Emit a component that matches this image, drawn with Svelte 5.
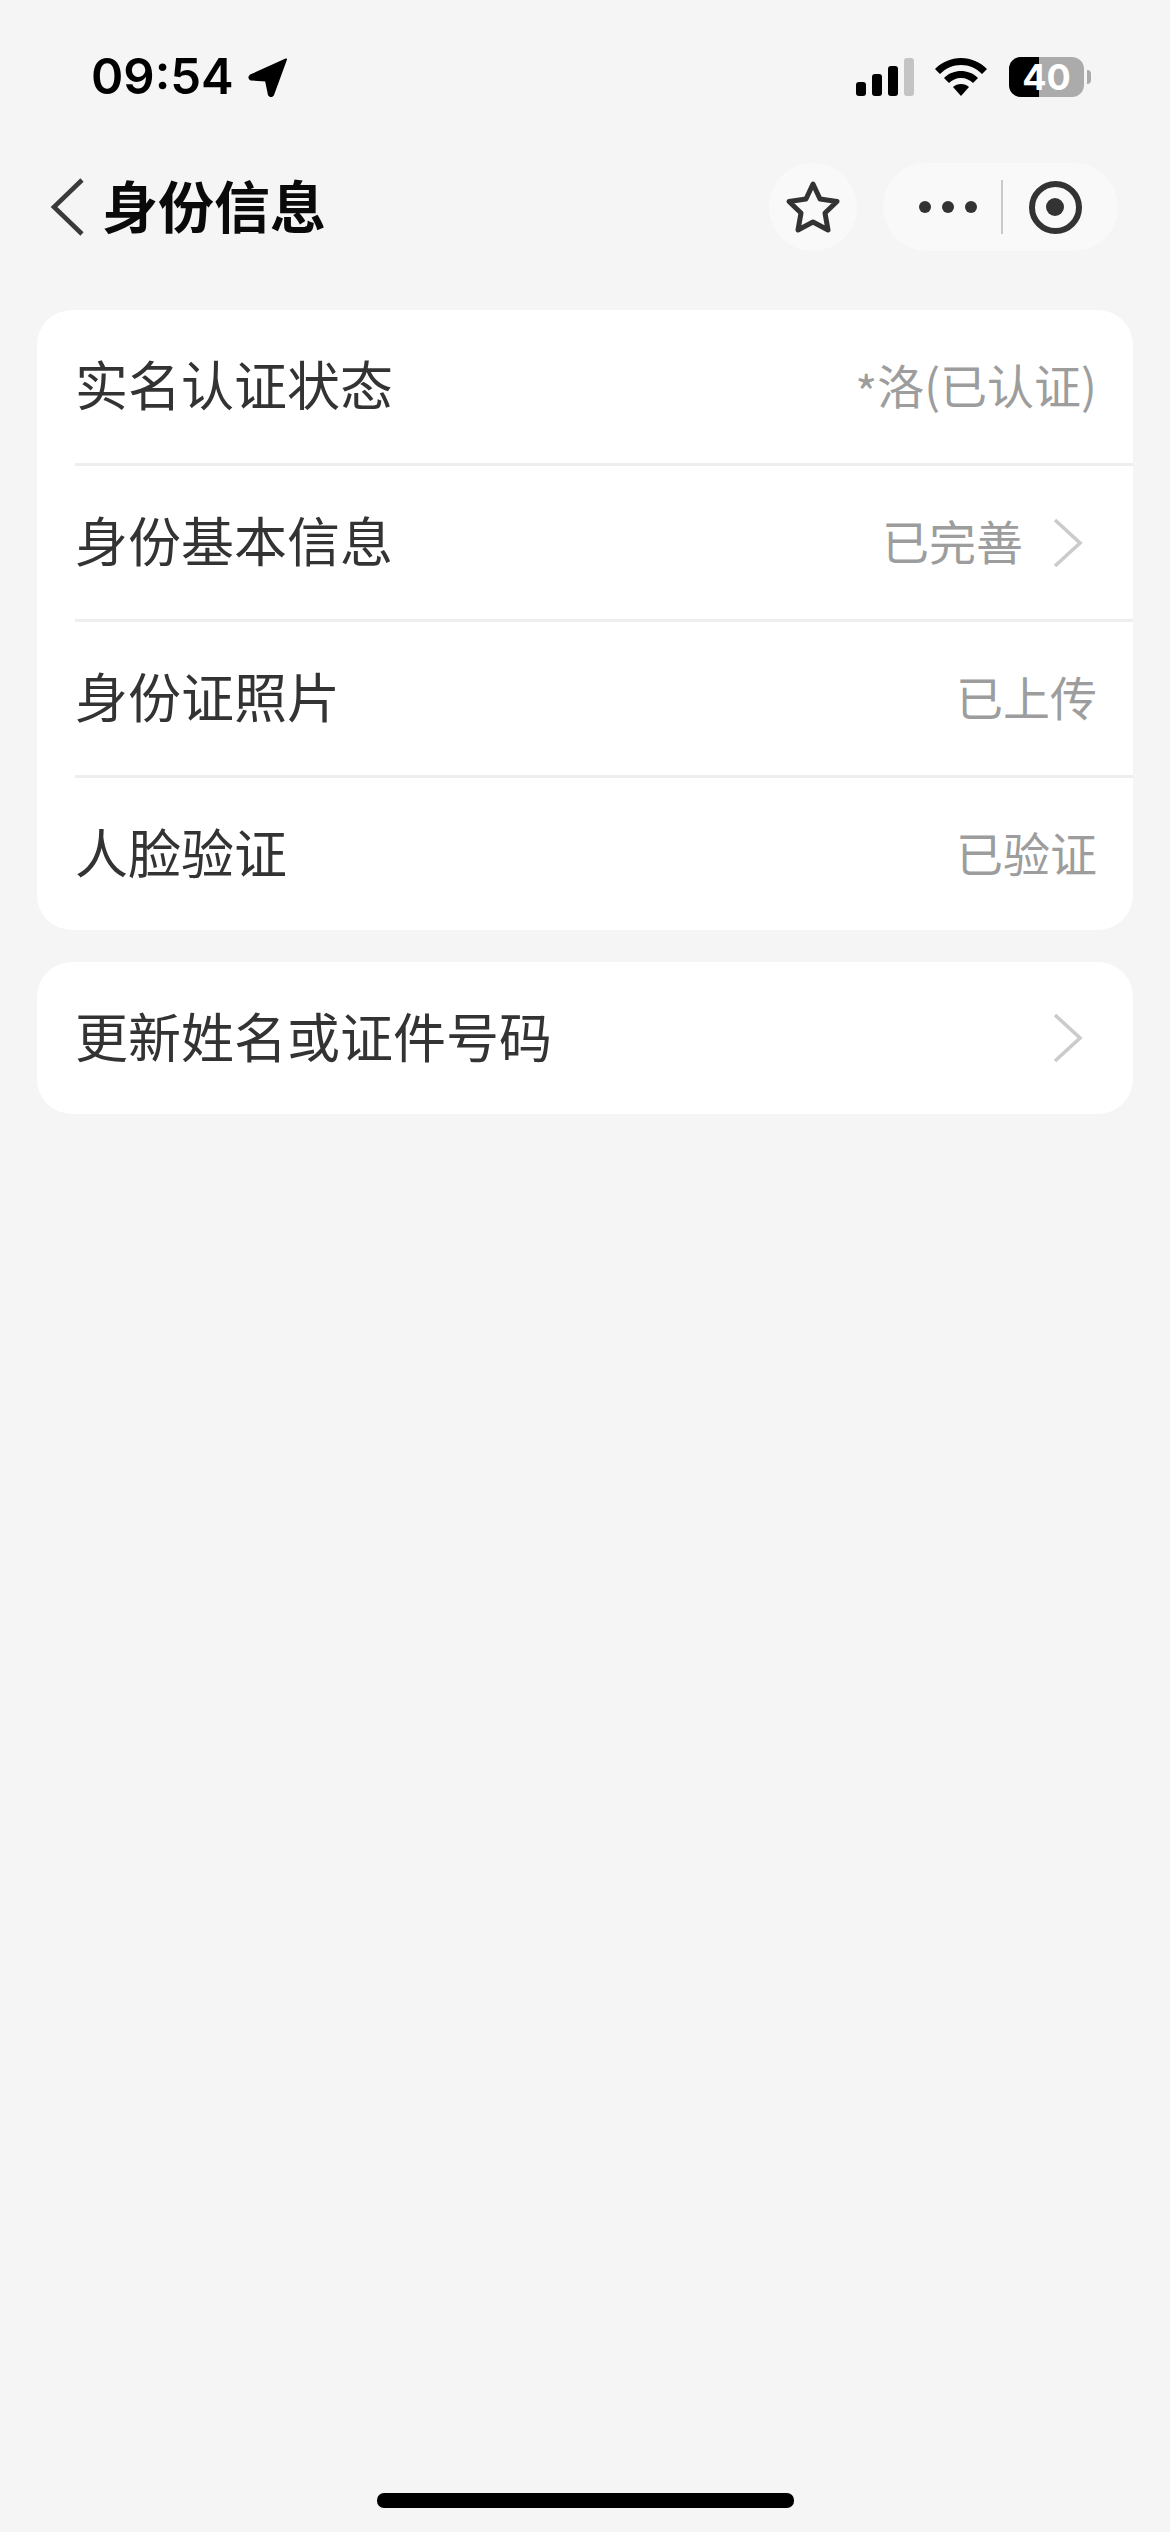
<script>
  const statusRows = [
    { label: '实名认证状态', mask: '*', value: '洛(已认证)', arrow: false },
    { label: '身份基本信息', value: '已完善', arrow: true },
    { label: '身份证照片', value: '已上传', arrow: false },
    { label: '人脸验证', value: '已验证', arrow: false },
  ];
</script>

{#snippet chevron()}
  <svg class="chevron" width="30" height="50" viewBox="0 0 30 50" aria-hidden="true">
    <path d="M2 2 L27 25 L2 48" fill="none" stroke="#cbcbcb" stroke-width="3.6" />
  </svg>
{/snippet}

<div class="page">
  <!-- iOS status bar -->
  <div class="status-bar">
    <div class="clock">
      <span class="time">09:54</span>
      <svg width="40" height="40" viewBox="0 0 40 40" aria-hidden="true">
        <path d="M38 2.500 L2.500 18.500 Q0 21 3 22.500 L18 23.500 L21 38 Q23 40.500 25 38 Z" fill="#000" stroke="#000" stroke-width="2" stroke-linejoin="round" />
      </svg>
    </div>
    <div class="indicators">
      <svg class="signal" width="58" height="38" viewBox="0 0 58 38" aria-hidden="true">
        <rect x="0" y="24" width="10" height="14" rx="3" fill="#000" />
        <rect x="16" y="16" width="10" height="22" rx="3" fill="#000" />
        <rect x="32" y="8" width="10" height="30" rx="3" fill="#000" />
        <rect x="48" y="0" width="10" height="38" rx="3" fill="#c4c4c4" />
      </svg>
      <svg class="wifi" width="52" height="38" viewBox="0 0 52 38" aria-hidden="true">
        <path d="M26 0 C16 0 7 4 0 11 L5 16 C11 10 18 7 26 7 C34 7 41 10 47 16 L52 11 C45 4 36 0 26 0 Z" fill="#000" />
        <path d="M26 13 C20 13 14 15 9 20 L14 25 C17 22 21 20 26 20 C31 20 35 22 38 25 L43 20 C38 15 32 13 26 13 Z" fill="#000" />
        <path d="M26 26 C23 26 20 27 18 29 L26 38 L34 29 C32 27 29 26 26 26 Z" fill="#000" />
      </svg>
      <div class="battery">
        <div class="battery-body">
          <div class="battery-fill"></div>
          <span class="battery-level">40</span>
        </div>
        <div class="battery-nub"></div>
      </div>
    </div>
  </div>

  <!-- Mini program nav -->
  <div class="nav">
    <svg class="back" width="36" height="58" viewBox="0 0 36 58" aria-hidden="true">
      <path d="M33 2 L5 29 L33 56" fill="none" stroke="#3a3a3a" stroke-width="4.600" />
    </svg>
    <h1 class="title">身份信息</h1>

    <div class="fav">
      <svg width="56" height="54" viewBox="0 0 56 54" aria-hidden="true">
        <path d="M28 4 L35 19 L52 21.500 L40 33 L43 50 L28 42 L13 50 L16 33 L4 21.500 L21 19 Z" fill="none" stroke="#333" stroke-width="5" stroke-linejoin="round" />
      </svg>
    </div>

    <div class="capsule">
      <div class="dots">
        <span></span><span></span><span></span>
      </div>
      <div class="capsule-line"></div>
      <div class="record"><span></span></div>
    </div>
  </div>

  <!-- Verification rows -->
  <div class="card first">
    {#each statusRows as row}
      <div class="row">
        <span class="label">{row.label}</span>
        <span class="value" class:with-arrow={row.arrow}>{#if row.mask}<span class="mask">{row.mask}</span>{/if}{row.value}</span>
        {#if row.arrow}{@render chevron()}{/if}
      </div>
    {/each}
  </div>

  <div class="card second">
    <div class="row">
      <span class="label">更新姓名或证件号码</span>
      {@render chevron()}
    </div>
  </div>

  <div class="home-indicator"></div>
</div>

<style>
  :global(body) {
    margin: 0;
    background: #f5f5f5;
  }

  .page {
    width: 1170px;
    height: 2532px;
    display: flex;
    flex-direction: column;
    background: #f5f5f5;
    font-family: "Noto Sans CJK SC", "Liberation Sans", sans-serif;
    overflow: hidden;
  }

  /* Status bar */
  .status-bar {
    height: 153px;
    flex-shrink: 0;
    box-sizing: border-box;
    padding: 0 79px 0 91px;
    display: flex;
    justify-content: space-between;
    align-items: center;
  }

  .clock {
    display: flex;
    align-items: center;
    gap: 14px;
  }

  .time {
    font-family: Inter, "Liberation Sans", sans-serif;
    font-size: 49px;
    line-height: 1;
    font-weight: 600;
    color: #000;
  }

  .indicators {
    display: flex;
    align-items: center;
  }

  .wifi {
    margin-left: 21px;
  }

  .battery {
    margin-left: 22px;
    display: flex;
    align-items: center;
    gap: 3px;
  }

  .battery-body {
    position: relative;
    width: 75px;
    height: 40px;
    border-radius: 12px;
    background: #ababab;
    display: flex;
    align-items: center;
    justify-content: center;
  }

  .battery-fill {
    position: absolute;
    top: 0;
    bottom: 0;
    left: 0;
    width: 30px;
    border-radius: 12px 0 0 12px;
    background: #000;
  }

  .battery-level {
    position: relative;
    font-family: Inter, "Liberation Sans", sans-serif;
    font-size: 36px;
    line-height: 1;
    font-weight: 700;
    color: #fff;
  }

  .battery-nub {
    width: 4px;
    height: 14px;
    border-radius: 0 4px 4px 0;
    background: #ababab;
  }

  /* Nav */
  .nav {
    height: 108px;
    flex-shrink: 0;
    display: flex;
    align-items: center;
    padding-left: 49px;
  }

  .title {
    margin: 0 0 6px 17px;
    font-size: 56px;
    line-height: 1;
    font-weight: 700;
    color: #0a0a0a;
  }

  .fav {
    margin-left: auto;
    width: 88px;
    height: 88px;
    border-radius: 50%;
    background: #f9f9f9;
    display: flex;
    align-items: center;
    justify-content: center;
  }

  .capsule {
    margin-left: 26px;
    margin-right: 52px;
    width: 235px;
    height: 88px;
    box-sizing: border-box;
    border-radius: 44px;
    background: #f9f9f9;
    display: flex;
    align-items: center;
    padding-left: 36px;
  }

  .dots {
    display: flex;
    gap: 11px;
  }

  .dots span {
    width: 12px;
    height: 12px;
    border-radius: 50%;
    background: #333;
  }

  .capsule-line {
    width: 1.5px;
    height: 54px;
    margin-left: 24px;
    background: #c9c9c9;
  }

  .record {
    margin-left: 26px;
    width: 53px;
    height: 53px;
    box-sizing: border-box;
    border: 6px solid #333;
    border-radius: 50%;
    display: flex;
    align-items: center;
    justify-content: center;
  }

  .record span {
    width: 18px;
    height: 18px;
    border-radius: 50%;
    background: #333;
  }

  /* Cards */
  .card {
    margin: 0 37px;
    background: #fff;
    border-radius: 35px;
    overflow: hidden;
  }

  .card.first {
    margin-top: 49px;
  }

  .card.second {
    margin-top: 32px;
  }

  .row {
    height: 156px;
    box-sizing: border-box;
    margin-left: 38px;
    padding-right: 36px;
    padding-bottom: 6px;
    display: flex;
    align-items: center;
    border-bottom: 3px solid #eeeeee;
  }

  .row:last-child {
    border-bottom: none;
    height: 152px;
  }

  .label {
    font-size: 53px;
    line-height: 1;
    color: #333;
  }

  .value {
    margin-left: auto;
    font-size: 47px;
    line-height: 1;
    color: #9d9d9d;
  }

  /* the asterisk sits lower in the reference's font */
  .mask {
    position: relative;
    top: 7px;
  }

  /* chevron stays on the row's centre while the text is lifted */
  .chevron {
    margin-left: auto;
    margin-right: 14px;
    flex-shrink: 0;
    transform: translateY(3px);
  }

  .value.with-arrow + .chevron {
    margin-left: 30px;
  }

  /* Home indicator */
  .home-indicator {
    width: 417px;
    height: 15px;
    margin: auto auto 24px;
    border-radius: 7px;
    background: #000;
  }
</style>
